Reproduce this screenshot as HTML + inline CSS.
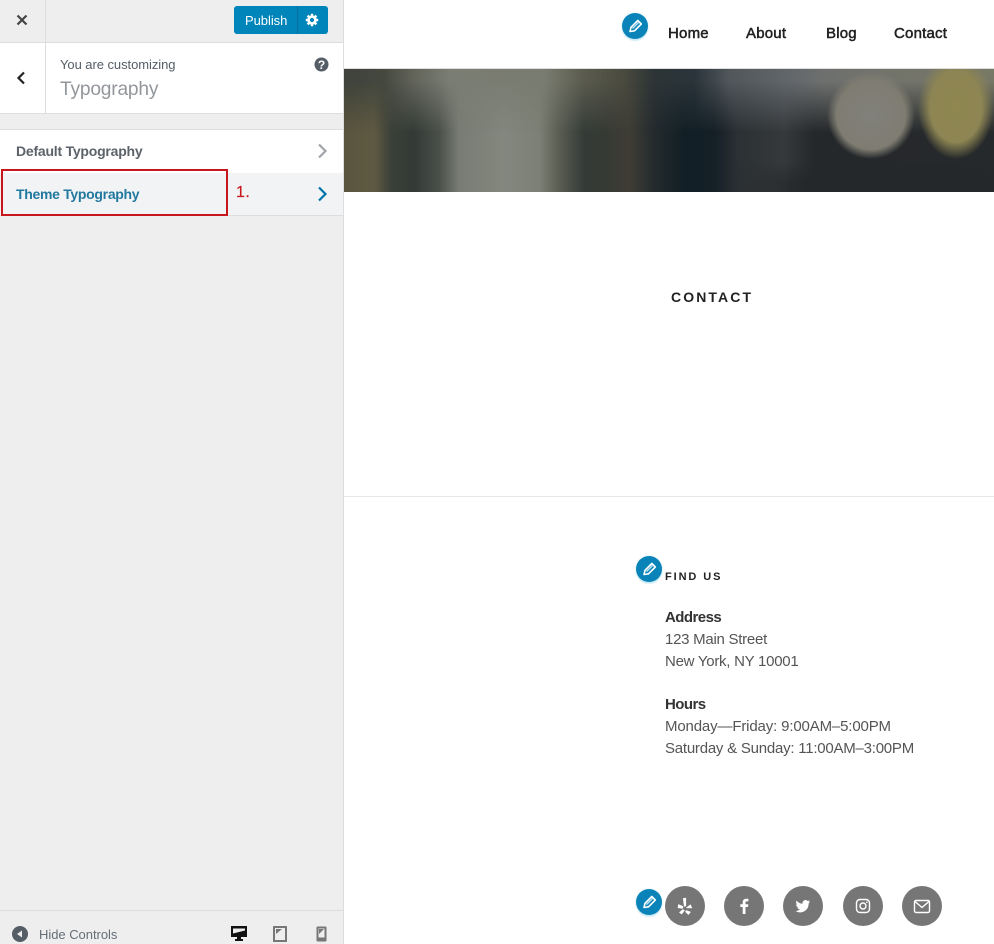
<!DOCTYPE html>
<html>
<head>
<meta charset="utf-8">
<style>
html,body{margin:0;padding:0;background:#fff;overflow:hidden}
body{width:994px;height:944px;position:relative;font-family:"Liberation Sans",sans-serif;color:#222}
.a{position:absolute;white-space:nowrap}
#side{left:0;top:0;width:343px;height:944px;background:#eee;border-right:1px solid #ddd;position:absolute}
.pen{position:absolute;width:26px;height:26px;border-radius:50%;background:#0a84b8;box-shadow:0 2px 1px rgba(180,225,240,.6),0 0 2px rgba(180,225,240,.6)}
.pen svg{position:absolute;left:0;top:0}
.soc{position:absolute;top:886px;width:40px;height:40px;border-radius:50%;background:#767676}
.soc svg{position:absolute;left:0;top:0}
.nav{top:25px;font-size:15px;color:#222;-webkit-text-stroke:.5px #222;letter-spacing:.2px}
.body{font-size:15px;color:#555;left:665px;letter-spacing:-.26px}
.b{font-weight:bold;color:#333;letter-spacing:-.55px}
.l{position:absolute;left:0;top:0;width:650px;height:123px}
</style>
</head>
<body>
<div id="side"></div>
<!-- top bar -->
<div class="a" style="left:0;top:0;width:343px;height:42px;background:#eee;border-bottom:1px solid #ddd"></div>
<div class="a" style="left:45px;top:0;width:1px;height:42px;background:#ddd"></div>
<svg class="a" style="left:15px;top:13px" width="14" height="14" viewBox="0 0 14 14"><path d="M2.500 2.500 L11.500 11.500 M11.500 2.500 L2.500 11.500" stroke="#444" stroke-width="2.200" fill="none"/></svg>
<div class="a" style="left:234px;top:6px;width:94px;height:28px;background:#0085ba;border-radius:3px"></div>
<div class="a" style="left:297px;top:6px;width:1px;height:28px;background:#006f9e"></div>
<div class="a" style="left:245px;top:13px;font-size:13px;color:#fff;letter-spacing:-.05px">Publish</div>
<svg class="a" style="left:305px;top:13px" width="14" height="14" viewBox="0 0 14 14"><circle cx="7" cy="7" r="3.400" fill="none" stroke="#fff" stroke-width="2.600"/><path d="M7 .8V3M7 11v2.200M.8 7H3M11 7h2.200M2.600 2.600l1.600 1.600M9.800 9.800l1.600 1.600M2.600 11.400l1.600-1.600M9.800 4.200l1.600-1.600" stroke="#fff" stroke-width="2.400"/></svg>
<!-- title -->
<div class="a" style="left:0;top:43px;width:343px;height:70px;background:#fff;border-bottom:1px solid #ddd"></div>
<div class="a" style="left:45px;top:43px;width:1px;height:70px;background:#ddd"></div>
<svg class="a" style="left:15px;top:70px" width="12" height="16" viewBox="0 0 12 16"><path d="M9 2.500 L3.500 8 L9 13.500" stroke="#222" stroke-width="2.200" fill="none"/></svg>
<div class="a" style="left:60px;top:57px;font-size:13px;color:#555d66;letter-spacing:-.06px">You are customizing</div>
<div class="a" style="left:60px;top:79px;font-size:19.200px;color:#93979b;letter-spacing:-.2px">Typography</div>
<svg class="a" style="left:314px;top:57px" width="15" height="15" viewBox="0 0 15 15"><circle cx="7.500" cy="7.500" r="7" fill="#555d66"/><text x="7.500" y="11.800" text-anchor="middle" font-size="12" font-weight="bold" fill="#fff" font-family="Liberation Sans">?</text></svg>
<!-- menu -->
<div class="a" style="left:0;top:129px;width:343px;height:43px;background:#fff;border-top:1px solid #ddd;border-bottom:1px solid #ddd"></div>
<div class="a" style="left:16px;top:143px;font-size:14px;font-weight:bold;color:#5c6269;letter-spacing:-.22px">Default Typography</div>
<svg class="a" style="left:316px;top:143px" width="12" height="16" viewBox="0 0 12 16"><path d="M3 1.500 L9.500 8 L3 14.500" stroke="#a0a5aa" stroke-width="2.200" fill="none"/></svg>
<div class="a" style="left:0;top:173px;width:343px;height:42px;background:#f2f3f5;border-bottom:1px solid #ddd"></div>
<div class="a" style="left:16px;top:186px;font-size:14px;font-weight:bold;color:#22799f;letter-spacing:-.3px">Theme Typography</div>
<svg class="a" style="left:316px;top:186px" width="12" height="16" viewBox="0 0 12 16"><path d="M3 1.500 L9.500 8 L3 14.500" stroke="#0073aa" stroke-width="2.200" fill="none"/></svg>
<div class="a" style="left:1px;top:169px;width:223px;height:43px;border:2px solid #c8161d"></div>
<div class="a" style="left:236px;top:184px;font-size:16px;color:#c8161d;letter-spacing:.5px;-webkit-text-stroke:.2px #c8161d">1.</div>
<!-- footer -->
<div class="a" style="left:0;top:910px;width:343px;height:34px;background:#eee;border-top:1px solid #ddd"></div>
<svg class="a" style="left:12px;top:926px" width="16" height="16" viewBox="0 0 16 16"><circle cx="8" cy="8" r="8" fill="#555d66"/><path d="M10 4.500V11.500L5 8Z" fill="#eee"/></svg>
<div class="a" style="left:39px;top:927px;font-size:13px;color:#666e75;letter-spacing:-.03px">Hide Controls</div>
<svg class="a" style="left:230px;top:926px" width="18" height="16" viewBox="0 0 18 16"><path d="M1 0H17V11H11V13H13V15H5V13H7V11H1Z" fill="#111"/><path d="M3 2.500H15V4.500L3 7.500Z" fill="#eee"/></svg>
<svg class="a" style="left:273px;top:926px" width="14" height="16" viewBox="0 0 14 16"><rect x="1" y="1" width="12" height="14" fill="none" stroke="#777" stroke-width="2"/><path d="M3 3H9L3 8Z" fill="#777"/></svg>
<svg class="a" style="left:316px;top:926px" width="11" height="16" viewBox="0 0 11 16"><rect x=".5" y=".5" width="10" height="15" rx="1" fill="#777"/><path d="M2.500 2.500H8.500V11.500H2.500Z" fill="#eee"/><path d="M3 3H8L3 8Z" fill="#777"/></svg>

<!-- hero -->
<div class="a" style="left:344px;top:68px;width:650px;height:1px;background:#ddd"></div>
<div class="a" style="left:344px;top:69px;width:650px;height:123px;overflow:hidden;background:#3c403b">
  <div class="l" style="background:linear-gradient(90deg,#5a553e 0,#5f5a42 30px,#3a3f38 48px,#333a36 70px,#4a4f49 95px,#787c73 115px,#83877e 160px,#7c8075 195px,#5a5d52 215px,#343b37 240px,#363a34 262px,#3f3d35 285px,#232b2d 310px,#121f26 340px,#141f26 370px,#2c3134 395px,#36393b 440px,#25282b 470px,#26292b 650px)"></div>
  <div class="l" style="background:linear-gradient(90deg,#3f423b 0,#45483f 40px,#62645a 70px,#7a7d73 105px,#797c70 200px,#5a5b4e 240px,#4a4a3f 280px,#2c3435 310px,#2a343a 350px,#50565a 385px,#60656a 440px,#6e706e 480px,#787866 650px);-webkit-mask-image:linear-gradient(180deg,#000 0,#000 10%,transparent 52%);mask-image:linear-gradient(180deg,#000 0,#000 10%,transparent 52%)"></div>
  <div class="l" style="background:radial-gradient(ellipse 38px 52px at 612px 38px,#8f8650 0,#8d8553 68%,rgba(135,128,85,0) 100%)"></div>
  <div class="l" style="background:radial-gradient(ellipse 44px 44px at 527px 46px,#81807a 0,#7f7d72 78%,rgba(120,115,100,0) 100%)"></div>
  <div class="l" style="background:linear-gradient(180deg,rgba(37,40,42,0) 76%,#25282a 92%);-webkit-mask-image:linear-gradient(90deg,transparent 60%,#000 72%);mask-image:linear-gradient(90deg,transparent 60%,#000 72%)"></div>
</div>

<!-- nav -->
<div class="pen" style="left:622px;top:13px"><svg width="26" height="26" viewBox="0 0 26 26"><path d="M8 18.500l1-4.200 6.800-6.800 3.500 3.500-6.800 6.800Z" fill="#0a84b8" stroke="#fff" stroke-width="1.600" stroke-linejoin="round"/><path d="M10.500 15.500l6-6" stroke="#bfe3f1" stroke-width="1.500"/></svg></div>
<div class="a nav" style="left:668px">Home</div>
<div class="a nav" style="left:746px">About</div>
<div class="a nav" style="left:826px">Blog</div>
<div class="a nav" style="left:894px">Contact</div>

<div class="a" style="left:671px;top:289px;font-size:14px;font-weight:bold;letter-spacing:2.100px;color:#222">CONTACT</div>
<div class="a" style="left:344px;top:496px;width:650px;height:1px;background:#e8e8e8"></div>

<div class="pen" style="left:636px;top:556px"><svg width="26" height="26" viewBox="0 0 26 26"><path d="M8 18.500l1-4.200 6.800-6.800 3.500 3.500-6.800 6.800Z" fill="#0a84b8" stroke="#fff" stroke-width="1.600" stroke-linejoin="round"/><path d="M10.500 15.500l6-6" stroke="#bfe3f1" stroke-width="1.500"/></svg></div>
<div class="a" style="left:665px;top:571px;font-size:11px;font-weight:bold;letter-spacing:1.900px;color:#222">FIND US</div>
<div class="a body b" style="top:609px">Address</div>
<div class="a body" style="top:631px">123 Main Street</div>
<div class="a body" style="top:653px">New York, NY 10001</div>
<div class="a body b" style="top:696px">Hours</div>
<div class="a body" style="top:718px;letter-spacing:-.15px">Monday—Friday: 9:00AM–5:00PM</div>
<div class="a body" style="top:740px;letter-spacing:-.23px">Saturday &amp; Sunday: 11:00AM–3:00PM</div>

<!-- social -->
<div class="soc" style="left:665px"><svg width="40" height="40" viewBox="0 0 40 40"><path d="M18.200 12.500L20.800 12V19.800L19.300 20.300Z M13.500 18.500L18 20.500L17.500 22.300L13 21.800Z M14.500 26.500L18 23.500L19.300 24.500L16.800 28Z M21.200 24.500L25.500 26L23.500 28.500L20.500 25.800Z M21.500 21.800L25.500 18.800L26.800 22Z" fill="#fff" stroke="#fff" stroke-width=".6" stroke-linejoin="round"/></svg></div>
<div class="soc" style="left:724px"><svg width="40" height="40" viewBox="0 0 40 40"><path d="M21.500 28V21H24L24.300 18.200H21.500V16.700C21.500 15.900 21.800 15.400 22.900 15.400H24.400V12.900C24 12.800 23.200 12.800 22.300 12.800C20.200 12.800 18.700 14 18.700 16.400V18.200H16.300V21H18.700V28Z" fill="#fff"/></svg></div>
<div class="soc" style="left:783px"><svg width="40" height="40" viewBox="0 0 40 40"><path d="M27 15.500a6 6 0 0 1-1.700.5 3 3 0 0 0 1.300-1.700 6 6 0 0 1-1.900.7 3 3 0 0 0-5.100 2.700 8.400 8.400 0 0 1-6.100-3.100 3 3 0 0 0 .9 4 3 3 0 0 1-1.300-.4 3 3 0 0 0 2.400 3 3 3 0 0 1-1.300 0 3 3 0 0 0 2.800 2.100A6 6 0 0 1 12.500 25a8.500 8.500 0 0 0 13.100-7.500A6 6 0 0 0 27 15.500Z" fill="#fff"/></svg></div>
<div class="soc" style="left:843px"><svg width="40" height="40" viewBox="0 0 40 40"><rect x="13.500" y="13.500" width="13" height="13" rx="3.500" fill="none" stroke="#fff" stroke-width="1.400"/><circle cx="20" cy="20" r="3" fill="none" stroke="#fff" stroke-width="1.400"/><circle cx="23.800" cy="16.200" r=".8" fill="#fff"/></svg></div>
<div class="soc" style="left:902px"><svg width="40" height="40" viewBox="0 0 40 40"><rect x="12.500" y="14.500" width="15" height="12" rx="1.500" fill="none" stroke="#fff" stroke-width="1.400"/><path d="M13 15.500L20 21.500L27 15.500" fill="none" stroke="#fff" stroke-width="1.400"/></svg></div>
<div class="pen" style="left:636px;top:889px"><svg width="26" height="26" viewBox="0 0 26 26"><path d="M8 18.500l1-4.200 6.800-6.800 3.500 3.500-6.800 6.800Z" fill="#0a84b8" stroke="#fff" stroke-width="1.600" stroke-linejoin="round"/><path d="M10.500 15.500l6-6" stroke="#bfe3f1" stroke-width="1.500"/></svg></div>
</body>
</html>
